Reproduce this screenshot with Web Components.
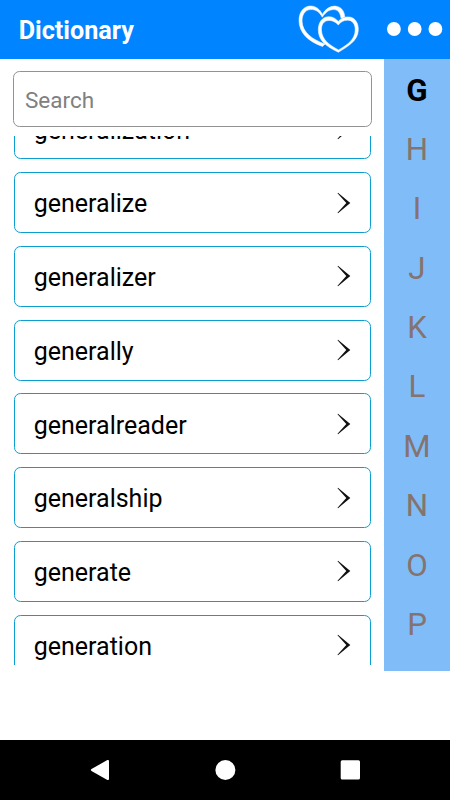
<!DOCTYPE html>
<html lang="en">
<head>
<meta charset="utf-8">
<title>Dictionary</title>
<style>
html,body{margin:0;height:100%;background:#fff;overflow:hidden}
body{font-family:Roboto,"Noto Sans",sans-serif}
</style>
</head>
<body>
<dictionary-app></dictionary-app>
<script>
const define = (name, html) => customElements.define(name, class extends HTMLElement {
  constructor() {
    super();
    const t = document.createElement('template');
    t.innerHTML = html;
    this.attachShadow({mode: 'open'}).append(t.content.cloneNode(true));
  }
});

define('app-header', `
<style>
:host{display:flex;height:58.5px;flex:none;align-items:center;background:#0084ff;color:#fff;box-sizing:border-box;padding-left:18.700px}
h1{margin:4px 0 0;flex:1;font:700 25.200px/30px Roboto,sans-serif}
svg{display:block;height:58px;width:152px;flex:none}
</style>
<h1><slot></slot></h1>
<svg viewBox="298 0 152 58" fill="#fff" fill-rule="evenodd">
<path stroke="#fff" stroke-width=".5" d="M322.500 14.500C325 9 331 5.500 336 6.200C341.500 7 344.800 11.500 344.800 18L341 18C340 12 337.500 9.600 333.500 9.600C328.500 9.700 325.200 13 322.300 17.200C319 11.500 315.500 9.300 310.500 9.600C304.800 10 301.900 15 302.100 21.500C302.500 32 312 39.500 325 44L322.500 46.500C308 41.500 299 32.500 299 20.500C299 12 303.500 6.200 310.500 6C316 5.900 320 9.500 322.500 14.500Z"/>
<path fill="#0084ff" d="M338.300 21.500C334 15 324 14 319.500 22C315 32 323 45 338.300 52C352 46 359 39 358.500 29C357 16 344 13 338.300 21.500Z"/>
<path stroke="#fff" stroke-width=".5" d="M338.300 21.500C341 17.800 345 16.500 349.500 17C355.500 17.700 358.700 23.500 358.300 30.500C357.700 41 348 46.300 338.400 52.300C326 46.300 318.100 40.500 318.300 29.500C318.400 22 322.500 16.900 328.500 16.700C333 16.600 336 18.700 338.300 21.500ZM338.300 25C335.500 21.700 332 20.200 328.500 20.500C323.800 20.800 321.200 24.500 321.500 30.500C322 39.500 329 44.800 338.500 49.900C348 44.500 355 39.500 355.200 30C355.400 23.800 352 20 347.500 20.200C343.500 20.300 340.500 22 338.300 25Z"/>
<circle cx="393.900" cy="29" r="6.900"/><circle cx="414.700" cy="29" r="6.900"/><circle cx="435.400" cy="29" r="6.900"/>
</svg>`);

define('search-box', `
<style>
:host{display:block;margin:12.500px 12px 0 12.500px;flex:none}
input{display:block;width:100%;height:56px;box-sizing:border-box;border:1.500px solid #929292;border-radius:6.500px;background:#fff;padding:2px 12px 0 11.500px;font:22.500px Roboto,sans-serif;outline:0}
input::placeholder{color:#808080;opacity:1}
</style>
<input type="text" placeholder="Search">`);

define('word-row', `
<style>
:host{display:flex;flex:none;box-sizing:border-box;height:61px;margin-bottom:12.750px;border:1.300px solid #0a9fd0;border-radius:6.500px;align-items:center;justify-content:space-between;padding:3.400px 19.500px 0 18.700px;background:#fff;color:#000;font-size:25px;line-height:30px}
svg{display:block;width:15px;height:22px;margin-top:-3.400px}
</style>
<span><slot></slot></span>
<svg viewBox="0 0 15 22"><path d="M2 .8L14.300 11L2 21.200L1.500 20.700L10.300 11L1.500 1.300Z" fill="#111"/></svg>`);

define('word-list', `
<style>
:host{display:block;height:529px;margin:9px 13px 0 14px;overflow:hidden;flex:none}
div{display:flex;flex-direction:column;margin-top:-37.600px}
</style>
<div><slot></slot></div>`);

define('letter-rail', `
<style>
:host{display:flex;flex-direction:column;width:66px;height:612.500px;flex:none;background:#80bdf8;color:#857370;font-size:31.300px;line-height:59.400px;text-align:center;box-sizing:border-box;padding-top:2px;overflow:hidden}
::slotted(*){display:block;height:59.400px;flex:none}
::slotted([active]){color:#000;font-weight:700}
</style>
<slot></slot>`);

define('nav-bar', `
<style>
:host{display:flex;justify-content:center;height:60px;flex:none;background:#000}
svg{display:block;width:125px;height:60px}
</style>
<svg viewBox="0 0 125 60" fill="#fff"><path d="M53.500 29.100L69.400 20Q71 19.500 71 21V39Q71 40.500 69.400 39.900L53.500 30.900Q52.100 30 53.500 29.100Z"/></svg>
<svg viewBox="0 0 125 60" fill="#fff"><circle cx="62.400" cy="30" r="10"/></svg>
<svg viewBox="0 0 125 60" fill="#fff"><rect x="52.700" y="20.300" width="19.300" height="19.300" rx="1.500"/></svg>`);

define('dictionary-app', `
<style>
:host{display:flex;flex-direction:column;width:450px;height:800px;background:#fff}
main{display:flex;flex:1;align-items:flex-start;min-height:0}
section{display:flex;flex-direction:column;flex:1;min-width:0}
</style>
<app-header>Dictionary</app-header>
<main>
<section>
<search-box></search-box>
<word-list>
<word-row>generalization</word-row><word-row>generalize</word-row><word-row>generalizer</word-row><word-row>generally</word-row><word-row>generalreader</word-row><word-row>generalship</word-row><word-row>generate</word-row><word-row>generation</word-row>
</word-list>
</section>
<letter-rail><span active>G</span><span>H</span><span>I</span><span>J</span><span>K</span><span>L</span><span>M</span><span>N</span><span>O</span><span>P</span></letter-rail>
</main>
<nav-bar></nav-bar>`);
</script>
</body>
</html>
